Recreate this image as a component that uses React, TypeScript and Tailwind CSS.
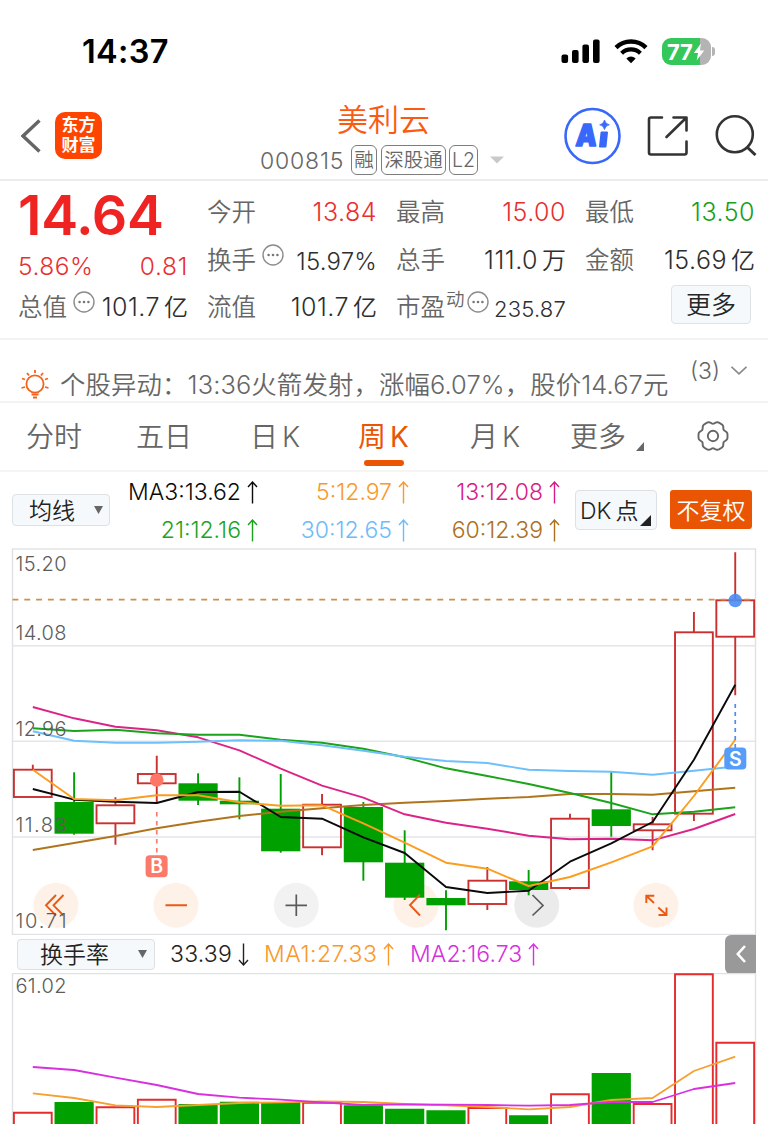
import type { ReactNode } from "react";

type Candle = { up: boolean; top: number; bottom: number; high: number; low: number };

const STEP = 41.32;
const FIRST_X = 32.8;
const cx = (i: number) => FIRST_X + i * STEP;

const candles: Candle[] = [
  { up: true, top: 769.7, bottom: 797, high: 764.7, low: 797 },
  { up: false, top: 802, bottom: 833.7, high: 772.3, low: 834.7 },
  { up: true, top: 805.3, bottom: 823.3, high: 797.3, low: 844.7 },
  { up: true, top: 774, bottom: 783.3, high: 755.7, low: 802.7 },
  { up: false, top: 783.3, bottom: 800.7, high: 773.3, low: 805 },
  { up: false, top: 800.7, bottom: 804.3, high: 777.3, low: 819.3 },
  { up: false, top: 808.7, bottom: 851.3, high: 774, low: 852.7 },
  { up: true, top: 804.7, bottom: 847.3, high: 794, low: 855.3 },
  { up: false, top: 807, bottom: 862.3, high: 802, low: 880.7 },
  { up: false, top: 862.7, bottom: 897.7, high: 830.3, low: 900 },
  { up: false, top: 898, bottom: 905.3, high: 890.3, low: 930.3 },
  { up: true, top: 880.7, bottom: 904, high: 867, low: 910 },
  { up: false, top: 881.3, bottom: 890, high: 870, low: 895.3 },
  { up: true, top: 818.7, bottom: 888, high: 813.7, low: 890 },
  { up: false, top: 809.3, bottom: 826, high: 772, low: 836.7 },
  { up: true, top: 824.3, bottom: 830.3, high: 817, low: 850.3 },
  { up: true, top: 632.3, bottom: 813.7, high: 612, low: 821 },
  { up: true, top: 600.3, bottom: 636.7, high: 552.3, low: 695.3 },
];

const averages = [
  { color: "#b0741c", ys: [850, 843, 836, 828.3, 821.7, 816, 811.7, 808.3, 805, 802.7, 801, 798.7, 797, 794, 794, 794.7, 791.3, 787.7] },
  { color: "#dc2488", ys: [707, 718.3, 726.7, 730.3, 737.3, 750.3, 768.7, 785.7, 797.7, 814.3, 822.7, 828.7, 835.7, 839.3, 838.7, 840.3, 829, 814] },
  { color: "#1ba31b", ys: [728.3, 731, 729.7, 733.3, 734.7, 734.7, 739.7, 742.7, 748.7, 757.3, 768.3, 776, 784, 793, 803, 814.3, 811.7, 807.3] },
  { color: "#6dc0fb", ys: [731.3, 740.7, 742.7, 742.7, 741.7, 740.3, 740.7, 745.3, 750.7, 756.7, 761, 763, 769.7, 771, 771.7, 774.7, 770.7, 766.5] },
  { color: "#0a0a0a", ys: [789, 799.7, 801.7, 803, 792, 791.7, 817, 818.7, 837.3, 853, 887, 893, 890.7, 861.7, 843.3, 822, 759.7, 684.7] },
  { color: "#fb9d1e", ys: [769.7, 799, 800.3, 795.3, 795.3, 802.3, 805.7, 805.3, 823.3, 842.7, 862.7, 868.7, 886, 877, 862.3, 846.3, 796, 739.7] },
];

const turnover = [1112.7, 1102, 1107.3, 1099.7, 1104, 1101.7, 1102, 1102.7, 1105.3, 1108.7, 1110.3, 1108, 1115.3, 1094.3, 1073, 1104, 974.3, 1042.7];

const turnoverAverages = [
  { color: "#f5a030", ys: [1093.3, 1098, 1105.3, 1107, 1105, 1103, 1102.3, 1101.3, 1102, 1104, 1105.3, 1107, 1109.3, 1107, 1100, 1098, 1071, 1056.7] },
  { color: "#d82fe0", ys: [1067, 1070, 1077.7, 1085, 1094, 1097.7, 1099.7, 1102.3, 1105, 1104.3, 1104.7, 1105, 1105.7, 1105, 1102, 1102, 1089, 1083] },
];

const toPoints = (ys: number[]) => ys.map((y, i) => `${cx(i)},${y}`).join(" ");

// six soft lobes around the hub of the settings icon
const gearPoints = Array.from({ length: 120 }, (_, i) => {
  const t = (i / 120) * Math.PI * 2;
  const r = 13.8 + 1.1 * Math.cos(6 * t) - 0.4 * Math.cos(12 * t);
  return `${17 + r * Math.cos(t)},${16 + r * Math.sin(t)}`;
}).join(" ");

function Dots({ className = "" }: { className?: string }) {
  return (
    <svg viewBox="0 0 22 22" className={`h-[22px] w-[22px] shrink-0 ${className}`} fill="none">
      <circle cx="11" cy="11" r="10" stroke="#8c8c8c" strokeWidth="1.4" />
      <circle cx="6.6" cy="11" r="1.3" fill="#777" />
      <circle cx="11" cy="11" r="1.3" fill="#777" />
      <circle cx="15.4" cy="11" r="1.3" fill="#777" />
    </svg>
  );
}

function Arrow({ down = false }: { down?: boolean }) {
  return (
    <svg viewBox="0 0 11 23" className="h-[23px] w-[11px] shrink-0" fill="none" stroke="currentColor" strokeWidth="1.4">
      {down ? <path d="M5.5 0.5V22M1 17l4.5 5 4.5-5" /> : <path d="M5.5 22.5V1M1 6l4.5-5L10 6" />}
    </svg>
  );
}

function StatusBar() {
  return (
    <div className="flex h-[103px] items-center pl-[82px] text-black">
      <div className="w-[479px] pt-[2px] text-[32.5px] font-semibold tracking-[0.3px]">14:37</div>
      <svg viewBox="0 0 39 25" className="h-[25px] w-[39px]">
        <rect x="0.5" y="15.5" width="6.6" height="8.5" rx="2" />
        <rect x="11" y="11" width="6.6" height="13" rx="2" />
        <rect x="21.4" y="5.5" width="6.6" height="18.5" rx="2" />
        <rect x="32" y="0.5" width="6.6" height="23.5" rx="2" />
      </svg>
      <svg viewBox="0 0 34 25" className="ml-[14px] h-[25px] w-[34px]" fill="none" stroke="#000">
        <path d="M2 8.6A21.5 21.5 0 0 1 32 8.6" strokeWidth="4.4" />
        <path d="M7.6 14.2A13.6 13.6 0 0 1 26.4 14.2" strokeWidth="4.2" />
        <path d="M17 24.2 12.3 19.4Q17 15.6 21.7 19.4Z" fill="#000" stroke="none" />
      </svg>
      <div className="ml-[14px] flex h-[27px] w-[49px] items-center overflow-hidden rounded-[9px] bg-linear-to-r from-[#34c759] from-77% to-[#b4b4b4] to-77% pl-[5px]">
        <span className="text-[22px] font-bold leading-none tracking-[-0.3px] text-white">77</span>
        <svg viewBox="0 0 12 19" className="ml-[1px] h-[18px] w-[12px] shrink-0" fill="#fff">
          <path d="M8 0.5 0.5 10.5H5L3.5 18.5 11.5 8H7Z" />
        </svg>
      </div>
      <div className="ml-[1px] h-[9px] w-[3px] rounded-r-full bg-[#b4b4b4]" />
    </div>
  );
}

function Tag({ children, className }: { children: ReactNode; className: string }) {
  return (
    <span className={`flex h-[30px] items-center justify-center rounded-[6px] border border-[#7d7d7d] pt-[1px] text-[19.5px] text-[#666] ${className}`}>
      {children}
    </span>
  );
}

function Header() {
  return (
    <header className="flex h-[78px] border-b-2 border-[#ececec]">
      <svg viewBox="0 0 20 34" className="ml-[21px] mt-[16px] h-[34px] w-[20px]" fill="none" stroke="#666" strokeWidth="3.4">
        <path d="M18.5 1.5 2 17l16.5 15.5" />
      </svg>
      <div className="ml-[14px] mt-[9px] flex h-[47px] w-[47px] flex-col items-center justify-center rounded-[10px] bg-[#ff4400] text-[17px] font-bold leading-[19.5px] text-white">
        <span>东方</span>
        <span>财富</span>
      </div>
      <div className="ml-[158px] flex w-[245px] flex-col">
        <div className="h-[39px] pl-[77px] text-[31px] leading-[34px] text-[#fb5a12]">美利云</div>
        <div className="flex h-[38px] items-center">
          <span className="w-[91px] pt-[2px] text-[23px] tracking-[0.8px] text-[#666]">000815</span>
          <Tag className="w-[26px]">融</Tag>
          <Tag className="ml-[4px] w-[65px]">深股通</Tag>
          <Tag className="ml-[3px] w-[29px]">L2</Tag>
          <svg viewBox="0 0 14 8" className="ml-[12px] h-[8px] w-[14px]" fill="#c9c9c9">
            <path d="M0 0.5H14L7 7.5Z" />
          </svg>
        </div>
      </div>
      <svg viewBox="0 0 58 58" className="ml-[58px] mt-[4px] h-[58px] w-[58px]">
        <circle cx="29.5" cy="29" r="27" fill="none" stroke="#3868fa" strokeWidth="2.6" />
        <text x="12" y="39" fontSize="30" fontWeight="900" textLength="21" lengthAdjust="spacingAndGlyphs" fill="#3868fa" stroke="#3868fa" strokeWidth="1.6" strokeLinejoin="round" transform="skewX(-4) translate(3 0)">A</text>
        <path d="M38.5 25.5H44L42.5 39.5H37Z" fill="#3868fa" stroke="#3868fa" strokeWidth="2" strokeLinejoin="round" />
        <path d="M41.5 13Q42.3 17 46.3 17.8 42.3 18.6 41.5 22.6 40.7 18.6 36.7 17.8 40.7 17 41.5 13Z" fill="#3868fa" stroke="#3868fa" strokeWidth="0.8" />
      </svg>
      <svg viewBox="0 0 42 42" className="ml-[26px] mt-[12px] h-[42px] w-[42px]" fill="none" stroke="#333" strokeWidth="2.6" strokeLinecap="round" strokeLinejoin="round">
        <path d="M15 2.5H4Q2 2.5 2 4.5V37.5Q2 39.5 4 39.5H37.5Q39.5 39.5 39.5 37.5V26.5M26.5 2.5H39.5V15.5M39 3 19.5 22" />
      </svg>
      <svg viewBox="0 0 42 42" className="ml-[26px] mt-[11px] h-[42px] w-[42px]" fill="none" stroke="#333" strokeWidth="2.6">
        <circle cx="19.8" cy="20.3" r="18" />
        <path d="m32 33 8.5 8" strokeWidth="3" />
      </svg>
    </header>
  );
}

function Quote({ label, value, tone = "text-[#2e2e2e]", unit, className = "h-[48px]", extra }: {
  label: string;
  value: string;
  tone?: string;
  unit?: string;
  className?: string;
  extra?: ReactNode;
}) {
  return (
    <div className={`flex items-center whitespace-nowrap ${className}`}>
      <span className="pt-[1px] text-[24.5px] text-[#666]">{label}</span>
      {extra}
      <span className={`ml-auto pt-[1px] text-[25px] tracking-[0.5px] ${tone}`}>{value}</span>
      {unit && <span className={`ml-[4px] pt-[1px] text-[24px] ${tone}`}>{unit}</span>}
    </div>
  );
}

function QuotePanel() {
  return (
    <section className="flex h-[159px] gap-[20px] border-b-2 border-[#f3f3f3] pl-[18px] pt-[7px]">
      <div className="w-[170px]">
        <div className="h-[55px] text-[55.5px] font-semibold leading-[54px] tracking-[-0.3px] text-[#f02323]">14.64</div>
        <div className="flex h-[41px] items-center justify-between pt-[6px] text-[24.5px] text-[#e83030]">
          <span className="tracking-[0.5px]">5.86%</span>
          <span className="tracking-[0.7px]">0.81</span>
        </div>
        <Quote label="总值" value="101.7" unit="亿" className="h-[46px]" extra={<Dots className="mb-[11px] ml-[6px]" />} />
      </div>
      <div className="-ml-[1px] w-[170px]">
        <Quote label="今开" value="13.84" tone="text-[#e83030]" />
        <div className="flex h-[48px] items-center">
          <span className="pt-[1px] text-[24.5px] text-[#666]">换手</span>
          <Dots className="mb-[11px] ml-[6px]" />
          <span className="ml-auto pt-[3px] text-[24px] tracking-[0.2px] text-[#2e2e2e]">15.97%</span>
        </div>
        <Quote label="流值" value="101.7" unit="亿" className="h-[46px]" />
      </div>
      <div className="-ml-[1px] w-[170px]">
        <Quote label="最高" value="15.00" tone="text-[#e83030]" />
        <Quote label="总手" value="111.0" unit="万" />
        <div className="flex h-[46px] items-center text-[#666]">
          <span className="pt-[1px] text-[24.5px]">市盈</span>
          <span className="mb-[14px] ml-[1px] text-[18.5px]">动</span>
          <Dots className="mb-[11px] ml-[2px]" />
          <span className="ml-auto pt-[5px] text-[22px] tracking-[0.2px] text-[#2e2e2e]">235.87</span>
        </div>
      </div>
      <div className="-ml-[1px] w-[170px]">
        <Quote label="最低" value="13.50" tone="text-[#18a018]" />
        <Quote label="金额" value="15.69" unit="亿" />
        <button className="ml-auto mr-[4px] mt-[1px] flex h-[39px] w-[80px] items-center justify-center rounded-[4px] border-[1.5px] border-[#dfe3e6] bg-[#f5f9fb] pt-[3px] text-[25px] text-[#262626]">
          更多
        </button>
      </div>
    </section>
  );
}

function NewsBar() {
  return (
    <section className="flex h-[63px] border-b-2 border-[#f3f3f3] pl-[21px] text-[#666]">
      <svg viewBox="0 0 28 30" className="mt-[29px] h-[30px] w-[28px]" fill="none" stroke="#f4611c" strokeWidth="1.8">
        <circle cx="14" cy="15" r="8.6" />
        <path d="M14 1v3M6 4l2 2.5M22 4l-2 2.5M1 9.5l3 1M27 9.5l-3 1M0.5 19l3.5-1M27.5 19 24 18M10.5 25.5h7M12 28.5h4" />
      </svg>
      <span className="ml-[11px] mt-[26px] w-[612px] whitespace-nowrap text-[25.4px] leading-[38px] tracking-[0.12px]">个股异动：13:36火箭发射，涨幅6.07%，股价14.67元</span>
      <span className="ml-[18px] mt-[16px] w-[41px] text-[23px] leading-[30px]">(3)</span>
      <svg viewBox="0 0 16 9" className="mt-[26px] h-[9px] w-[16px]" fill="none" stroke="#8a8a8a" strokeWidth="1.7">
        <path d="m0.5 0.8 7.5 7 7.5-7" />
      </svg>
    </section>
  );
}

function Tabs() {
  return (
    <nav className="flex h-[69px] items-start border-b-2 border-[#f5f5f5] pl-[26px] text-[28px] leading-[68px] text-[#666]">
      <span className="w-[110px]">分时</span>
      <span className="w-[114px]">五日</span>
      <span className="w-[108px]">日<span className="ml-[4px]">K</span></span>
      <span className="flex h-[63px] w-[52px] flex-col whitespace-nowrap text-[#ea5504]">
        <span className="h-[57px] font-normal">周<span className="ml-[4px]">K</span></span>
        <span className="ml-[6px] h-[6px] w-[40px] shrink-0 rounded-full bg-[#ea5504]" />
      </span>
      <span className="ml-[60px] w-[100px]">月<span className="ml-[4px]">K</span></span>
      <span className="w-[66px]">更多</span>
      <svg viewBox="0 0 8 9" className="mt-[39px] h-[9px] w-[8px]" fill="#666">
        <path d="M8 0V9H0Z" />
      </svg>
      <svg viewBox="0 0 34 32" className="ml-[52px] mt-[17px] h-[32px] w-[34px]" fill="none" stroke="#666" strokeWidth="1.9">
        <circle cx="17" cy="16" r="5.2" />
        <polygon points={gearPoints} />
      </svg>
    </nav>
  );
}

function Ma({ text, tone }: { text: string; tone: string }) {
  return (
    <span className={`flex items-center justify-end gap-[6px] whitespace-nowrap ${tone}`}>
      {text}
      <Arrow />
    </span>
  );
}

function AverageBar() {
  return (
    <section className="flex h-[75px] pl-[12px]">
      <button className="mt-[22px] flex h-[32px] w-[98px] items-center rounded-[4px] border-[1.5px] border-[#dde1e4] bg-[#f5f9fb] pl-[16px] pt-[2px] text-[23px] text-[#222]">
        均线
        <svg viewBox="0 0 9 8" className="mb-[2px] ml-[19px] h-[8px] w-[9px]" fill="#666">
          <path d="M0 0H9L4.5 8Z" />
        </svg>
      </button>
      <div className="grid w-[450px] grid-cols-[148px_151px_151px] grid-rows-[37px_38px] pt-[2px] text-[23px]">
        <Ma text="MA3:13.62" tone="text-[#0a0a0a]" />
        <Ma text="5:12.97" tone="text-[#f8992a]" />
        <Ma text="13:12.08" tone="text-[#d81b87]" />
        <Ma text="21:12.16" tone="text-[#1ba31b]" />
        <Ma text="30:12.65" tone="text-[#6dbcf8]" />
        <Ma text="60:12.39" tone="text-[#ac701a]" />
      </div>
      <button className="ml-[15px] mt-[18px] flex h-[40px] w-[82px] items-center rounded-[4px] border-[1.5px] border-[#dde1e4] bg-[#f5f9fb] pl-[4px] pt-[2px] text-[23px] text-[#222]">
        DK
        <span className="ml-[4px]">点</span>
        <svg viewBox="0 0 11 11" className="ml-[2px] mt-[18px] h-[11px] w-[11px] shrink-0" fill="#222">
          <path d="M11 0V11H0Z" />
        </svg>
      </button>
      <button className="ml-[13px] mt-[18px] flex h-[39px] w-[82px] items-center justify-center rounded-[3px] bg-[#ea5504] pt-[3px] text-[23px] text-white">不复权</button>
    </section>
  );
}

function AxisLabel({ y, children }: { y: number; children: string }) {
  return (
    <text x="15.5" y={y} fontSize="20" textLength="51" fill="#5c5c5c">
      {children}
    </text>
  );
}

function Marker({ x, y, color, children }: { x: number; y: number; color: string; children: string }) {
  return (
    <g>
      <rect x={x - 11} y={y - 11} width="22" height="22" rx="4" fill={color} />
      <text x={x} y={y + 7} fontSize="19.5" fontWeight="600" textAnchor="middle" fill="#fff">{children}</text>
    </g>
  );
}

function CandleChart() {
  return (
    <svg viewBox="0 547 768 388" className="block h-[388px] w-[768px]" fill="none">
      <rect x="12.5" y="549" width="743" height="385.5" stroke="#e0e1e4" strokeWidth="1.4" />
      {[645.7, 741.3, 837].map((y) => (
        <path key={y} d={`M12.5 ${y}H755.5`} stroke="#e5e5ea" strokeWidth="1.5" />
      ))}
      {/* tool buttons */}
      {[56, 176, 416, 656].map((x) => (
        <circle key={x} cx={x} cy="905.3" r="22.5" fill="#fdf1e8" />
      ))}
      <circle cx="296.3" cy="905.3" r="22.5" fill="#f2f2f2" />
      <circle cx="536.7" cy="905.3" r="22.5" fill="#ebebeb" />

      {candles.map((c, i) => {
        const x = cx(i);
        return c.up ? (
          <g key={i} stroke="#c9302f" strokeWidth="1.9">
            <path d={`M${x} ${c.high}V${c.top}M${x} ${c.bottom}V${c.low}`} />
            <rect x={x - 18.9} y={c.top} width="37.8" height={c.bottom - c.top} />
          </g>
        ) : (
          <g key={i}>
            <path d={`M${x} ${c.high}V${c.low}`} stroke="#00a000" strokeWidth="1.9" />
            <rect x={x - 19.6} y={c.top} width="39.2" height={c.bottom - c.top} fill="#00a000" />
          </g>
        );
      })}
      <path d="M12.5 599.7H755.5" stroke="#cc8f4e" strokeWidth="1.8" strokeDasharray="5.9 5.9" />
      {averages.map((a) => (
        <polyline key={a.color} points={toPoints(a.ys)} stroke={a.color} strokeWidth="1.9" strokeLinejoin="round" />
      ))}

      <g stroke="#ea5a14" strokeWidth="1.9">
        <path d="M56 895 46 905.3 56 915.5M63.5 895 53.5 905.3 63.5 915.5M165.5 905.3h21.5M420 894.5 410 905l10 10.5" />
        <path d="M646.3 903v-7.200h8M646.500 896l7.500 7M666.500 907.500v7.500h-8M666.300 914.800l-8-7.300" />
      </g>
      <g stroke="#5a5a5a" strokeWidth="1.7">
        <path d="M285.5 905.3h21.5M296.3 894.5v21.5M532.5 895 543 905.5l-10.5 10" />
      </g>

      <path d={`M${cx(3)} 812V855`} stroke="#fb7a6c" strokeWidth="1.7" strokeDasharray="4.5 4.5" />
      <circle cx={cx(3)} cy="780" r="6.8" fill="#ff7566" />
      <Marker x={156.6} y={866.3} color="#fb7a6c">B</Marker>
      <path d={`M${cx(17)} 704V748`} stroke="#4a90f0" strokeWidth="1.7" strokeDasharray="4 4" />
      <circle cx={cx(17)} cy="600.5" r="6.8" fill="#4a8cf4" fillOpacity="0.9" />
      <Marker x={735.3} y={758.6} color="#559cfb">S</Marker>

      <AxisLabel y={571}>15.20</AxisLabel>
      <AxisLabel y={639.5}>14.08</AxisLabel>
      <AxisLabel y={735.5}>12.96</AxisLabel>
      <AxisLabel y={831.5}>11.83</AxisLabel>
      <AxisLabel y={927.5}>10.71</AxisLabel>
    </svg>
  );
}

function TurnoverBar() {
  return (
    <div className="flex h-[38px] items-center pl-[17px] text-[23px]">
      <button className="flex h-[31px] w-[138px] items-center rounded-[4px] border-[1.5px] border-[#dde1e4] bg-[#f5f9fb] pl-[22px] pt-[2px] text-[#222]">
        换手率
        <svg viewBox="0 0 9 8" className="mb-[2px] ml-[29px] h-[8px] w-[9px]" fill="#666">
          <path d="M0 0H9L4.5 8Z" />
        </svg>
      </button>
      <span className="ml-[15px] flex w-[94px] items-center gap-[6px] tracking-[0.2px] text-[#222]">33.39<Arrow down /></span>
      <span className="flex w-[146px] items-center gap-[6px] tracking-[0.5px] text-[#f8992a]">MA1:27.33<Arrow /></span>
      <span className="flex items-center gap-[6px] tracking-[0.1px] text-[#d82fe0]">MA2:16.73<Arrow /></span>
      <button className="ml-auto mr-[12px] flex h-[39px] w-[31px] items-center justify-center rounded-l-[6px] bg-[#999]">
        <svg viewBox="0 0 10 18" className="h-[18px] w-[10px]" fill="none" stroke="#fff" strokeWidth="2.6">
          <path d="M9 1 1.8 9 9 17" />
        </svg>
      </button>
    </div>
  );
}

function TurnoverChart() {
  return (
    <svg viewBox="0 973 768 151" className="block h-[151px] w-[768px]" fill="none">
      <path d="M12.5 1124V973.5H755.5V1124" stroke="#e0e1e4" strokeWidth="1.4" />
      {turnover.map((y, i) =>
        candles[i].up ? (
          <path key={i} d={`M${cx(i) - 18.9} 1126V${y}h37.8V1126`} stroke="#e52b2b" strokeWidth="1.9" />
        ) : (
          <path key={i} d={`M${cx(i) - 19.6} 1124V${y}h39.2V1124Z`} fill="#00a000" />
        ),
      )}
      {turnoverAverages.map((a) => (
        <polyline key={a.color} points={toPoints(a.ys)} stroke={a.color} strokeWidth="1.8" strokeLinejoin="round" />
      ))}
      <AxisLabel y={992.5}>61.02</AxisLabel>
    </svg>
  );
}

export default function App() {
  return (
    <main className="h-[1124px] w-[768px] overflow-hidden bg-white font-[350] font-['Inter','Noto_Sans_CJK_SC',sans-serif]">
      <StatusBar />
      <Header />
      <QuotePanel />
      <NewsBar />
      <Tabs />
      <AverageBar />
      <CandleChart />
      <TurnoverBar />
      <TurnoverChart />
    </main>
  );
}
